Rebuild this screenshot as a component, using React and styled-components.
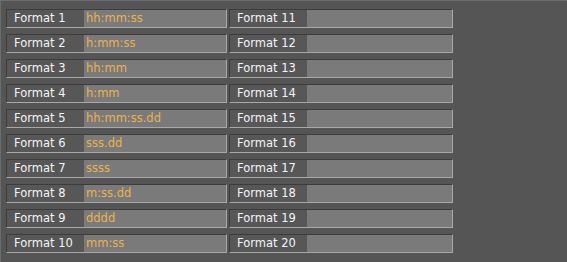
import React from "react";
import styled, { createGlobalStyle } from "styled-components";

const formats = [
  "hh:mm:ss",
  "h:mm:ss",
  "hh:mm",
  "h:mm",
  "hh:mm:ss.dd",
  "sss.dd",
  "ssss",
  "m:ss.dd",
  "dddd",
  "mm:ss",
];

function App() {
  const rows = formats.map((value, i) => ({
    left: { label: `Format ${i + 1}`, value },
    right: { label: `Format ${i + 11}`, value: "" },
  }));

  return (
    <>
      <GlobalStyle />
      <Page>
        <Grid>
          {rows.map((row) => (
            <React.Fragment key={row.left.label}>
              <Cell>
                <Label>{row.left.label}</Label>
                <Field>{row.left.value}</Field>
              </Cell>
              <Cell>
                <Label>{row.right.label}</Label>
                <Field>{row.right.value}</Field>
              </Cell>
            </React.Fragment>
          ))}
        </Grid>
      </Page>
    </>
  );
}

export default App;

// --------------- styles ------------------

const GlobalStyle = createGlobalStyle`
  html, body {
    margin: 0;
    padding: 0;
    background: #555555;
  }
  body {
    font-family: "DejaVu Sans", Verdana, sans-serif;
  }
`;

const Page = styled.div`
  width: 567px;
  height: 262px;
  box-sizing: border-box;
  background: #555555;
  border-top: 1px solid #6c6c6c;
  border-left: 1px solid #6c6c6c;
  padding: 8px 0 0 5px;
`;

const Grid = styled.div`
  display: grid;
  grid-template-columns: 221px 224px;
  column-gap: 2px;
  row-gap: 6px;
`;

const Cell = styled.div`
  display: flex;
  height: 19px;
  box-sizing: border-box;
  border-top: 1px solid #3c3c3c;
  border-left: 1px solid #3c3c3c;
  border-bottom: 1px solid #a8a8a8;
  border-right: 1px solid #a8a8a8;
  background: #575757;
`;

const Label = styled.div`
  width: 77px;
  flex: none;
  box-sizing: border-box;
  padding-left: 7px;
  font-size: 11.5px;
  line-height: 17px;
  color: #f4f4f4;
  white-space: nowrap;
`;

const Field = styled.div`
  flex: 1;
  background: #7a7a7a;
  padding-left: 2px;
  font-size: 11.5px;
  line-height: 17px;
  color: #ebb24a;
  white-space: nowrap;
`;
